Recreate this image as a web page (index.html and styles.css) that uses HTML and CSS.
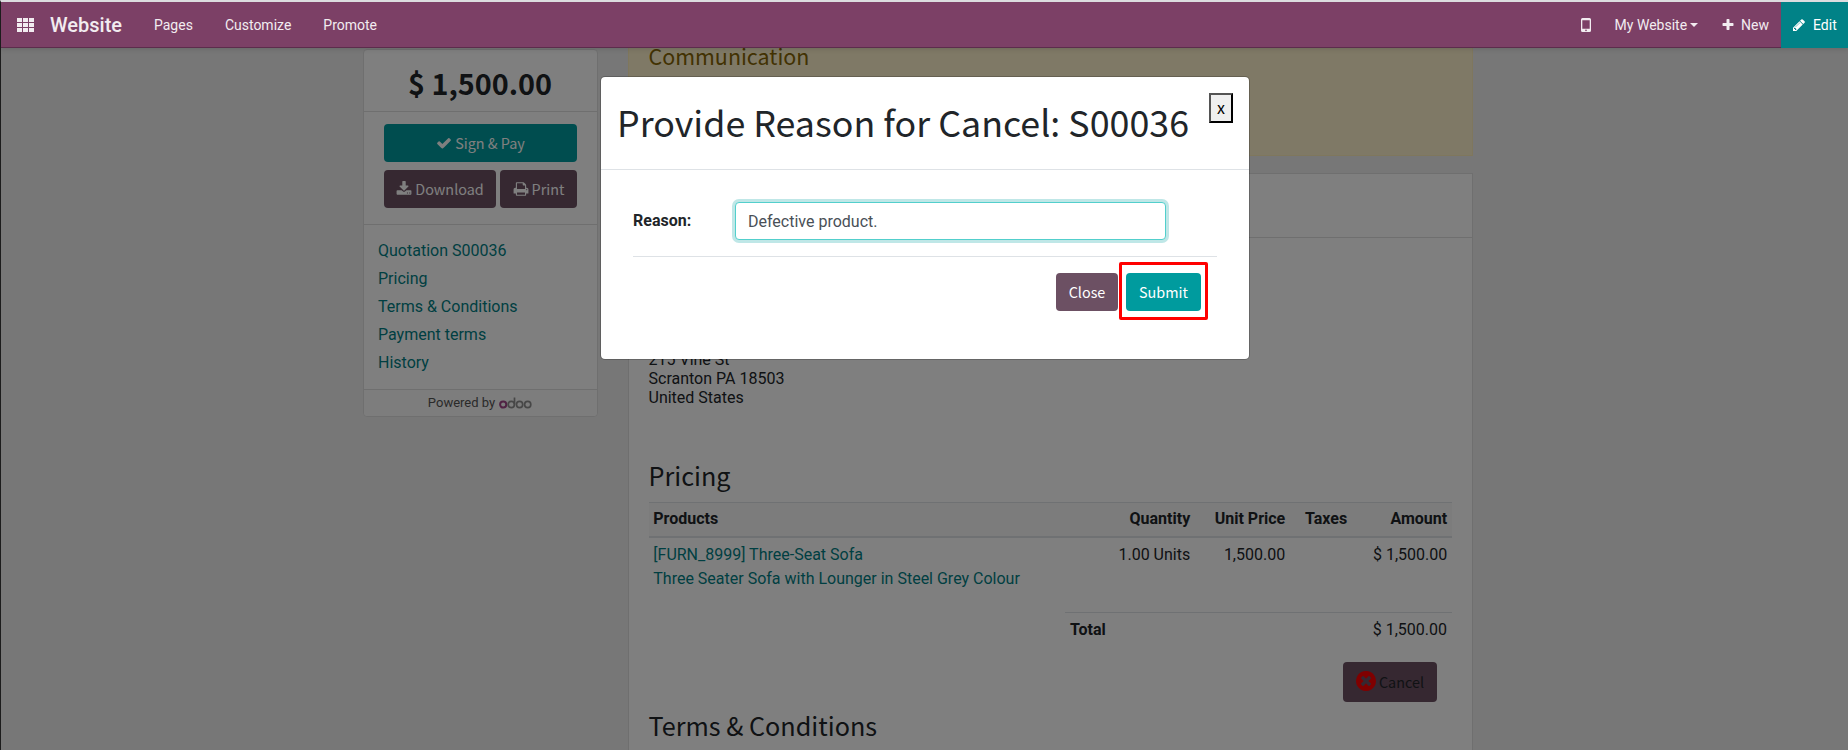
FILE: index.html
```html
<!DOCTYPE html>
<html lang="en">
<head>
<meta charset="utf-8">
<title>Website</title>
<link rel="stylesheet" href="styles.css">
</head>
<body>
<div class="window">
  <nav class="navbar">
    <svg class="apps" viewBox="0 0 17 14"><path d="M0 0h5v4H0zM6 0h5v4H6zM12 0h5v4h-5zM0 5h5v4H0zM6 5h5v4H6zM12 5h5v4h-5zM0 10h5v4H0zM6 10h5v4H6zM12 10h5v4h-5z"/></svg>
    <span class="brand">Website</span>
    <span class="menu-item">Pages</span>
    <span class="menu-item">Customize</span>
    <span class="menu-item">Promote</span>
    <div class="systray">
      <svg class="mobile" viewBox="0 0 10 14"><path fill-rule="evenodd" d="M1.5 0h7A1.5 1.5 0 0 1 10 1.500v11A1.500 1.500 0 0 1 8.500 14h-7A1.500 1.500 0 0 1 0 12.500v-11A1.500 1.500 0 0 1 1.500 0zM1.300 2.200v8.600h7.400V2.200zM5 11.600a.8.8 0 1 0 0 1.600.8.8 0 0 0 0-1.600z"/></svg>
      <span class="site">My Website<i class="caret"></i></span>
      <span class="new"><svg class="icon" viewBox="0 0 1792 1792"><path d="M1600 736v192q0 40-28 68t-68 28h-416v416q0 40-28 68t-68 28h-192q-40 0-68-28t-28-68v-416h-416q-40 0-68-28t-28-68v-192q0-40 28-68t68-28h416v-416q0-40 28-68t68-28h192q40 0 68 28t28 68v416h416q40 0 68 28t28 68z"/></svg>New</span>
      <span class="edit"><svg class="icon" viewBox="0 0 1792 1792"><path d="M491 1536l91-91-235-235-91 91v107h128v128h107zm523-928q0-22-22-22-10 0-17 7l-542 542q-7 7-7 17 0 22 22 22 10 0 17-7l542-542q7-7 7-17zm-54-192l416 416-832 832h-416v-416zm683 96q0 53-37 90l-166 166-416-416 166-165q36-38 90-38 53 0 91 38l235 234q37 39 37 91z"/></svg>Edit</span>
    </div>
  </nav>

  <main class="page">
    <aside class="sidebar">
      <div class="amount"><b>$ 1,500.00</b></div>
      <div class="actions">
        <span class="btn primary wide"><svg class="bicon" viewBox="0 0 1792 1792"><path d="M1671 566q0 40-28 68l-724 724-136 136q-28 28-68 28t-68-28l-136-136-362-362q-28-28-28-68t28-68l136-136q28-28 68-28t68 28l294 295 656-657q28-28 68-28t68 28l136 136q28 28 28 68z"/></svg>Sign &amp; Pay</span>
        <div class="pair">
          <span class="btn secondary download"><svg class="bicon" viewBox="0 0 1792 1792"><path d="M1344 1344q0-26-19-45t-45-19-45 19-19 45 19 45 45 19 45-19 19-45zm256 0q0-26-19-45t-45-19-45 19-19 45 19 45 45 19 45-19 19-45zm128-224v320q0 40-28 68t-68 28h-1472q-40 0-68-28t-28-68v-320q0-40 28-68t68-28h465l135 136q58 56 136 56t136-56l136-136h464q40 0 68 28t28 68zm-325-569q17 41-14 70l-448 448q-18 19-45 19t-45-19l-448-448q-31-29-14-70 17-39 59-39h256v-448q0-26 19-45t45-19h256q26 0 45 19t19 45v448h256q42 0 59 39z"/></svg>Download</span>
          <span class="btn secondary print"><svg class="bicon" viewBox="0 0 1792 1792"><path d="M448 1536h896v-256h-896v256zm0-640h896v-384h-160q-40 0-68-28t-28-68v-160h-640v640zm1152 64q0-26-19-45t-45-19-45 19-19 45 19 45 45 19 45-19 19-45zm128 0v416q0 13-9.500 22.500t-22.500 9.500h-224v160q0 40-28 68t-68 28h-960q-40 0-68-28t-28-68v-160h-224q-13 0-22.500-9.500t-9.500-22.500v-416q0-79 56.500-135.500t135.500-56.500h64v-544q0-40 28-68t68-28h672q40 0 88 20t76 48l152 152q28 28 48 76t20 88v256h64q79 0 135.500 56.500t56.500 135.500z"/></svg>Print</span>
        </div>
      </div>
      <ul class="toc">
        <li>Quotation S00036</li>
        <li>Pricing</li>
        <li>Terms &amp; Conditions</li>
        <li>Payment terms</li>
        <li>History</li>
      </ul>
      <div class="powered">Powered by
        <svg class="odoo" viewBox="0 0 33 12" fill="none" stroke-width="1.700"><circle cx="4.200" cy="7.500" r="3.100" stroke="#a24689" stroke-width="2"/><g stroke="#8f8f8f"><circle cx="12.300" cy="7.500" r="3.100"/><path d="M15.500 0.500v7"/><circle cx="20.600" cy="7.500" r="3.100"/><circle cx="28.700" cy="7.500" r="3.100"/></g></svg>
      </div>
    </aside>

    <section class="content">
      <div class="alert"><h3>Communication</h3></div>
      <article class="card">
        <div class="card-head"></div>
        <address class="address">215 Vine St<br>Scranton PA 18503<br>United States</address>
        <h2 class="title">Pricing</h2>
        <table class="lines">
          <colgroup><col class="c-product"><col class="c-qty"><col class="c-price"><col class="c-tax"><col class="c-amount"></colgroup>
          <thead><tr><th class="left">Products</th><th>Quantity</th><th>Unit Price</th><th>Taxes</th><th>Amount</th></tr></thead>
          <tbody><tr><td class="left product">[FURN_8999] Three-Seat Sofa<br>Three Seater Sofa with Lounger in Steel Grey Colour</td><td>1.00 Units</td><td>1,500.00</td><td></td><td>$ 1,500.00</td></tr></tbody>
        </table>
        <div class="total"><b>Total</b><span>$ 1,500.00</span></div>
        <div class="cancel-row"><span class="btn secondary cancel"><svg class="cross" viewBox="128 128 1536 1536"><path d="M1277 1122q0-26-19-45l-181-181 181-181q19-19 19-45 0-27-19-46l-90-90q-19-19-46-19-26 0-45 19l-181 181-181-181q-19-19-45-19-27 0-46 19l-90 90q-19 19-19 46 0 26 19 45l181 181-181 181q-19 19-19 45 0 27 19 46l90 90q19 19 46 19 26 0 45-19l181-181 181 181q19 19 45 19 27 0 46-19l90-90q19-19 19-46zm387-226q0 209-103 385.500t-279.500 279.500-385.500 103-385.500-103-279.500-279.500-103-385.500 103-385.500 279.500-279.500 385.500-103 385.500 103 279.500 279.500 103 385.500z"/></svg>Cancel</span></div>
        <h2 class="title terms">Terms &amp; Conditions</h2>
      </article>
    </section>
  </main>

  <div class="backdrop">
    <div class="modal">
      <header class="modal-head">
        <h1>Provide Reason for Cancel: S00036</h1>
        <button class="close-x" type="button">x</button>
      </header>
      <div class="modal-body">
        <div class="field">
          <label for="reason">Reason:</label>
          <input id="reason" class="reason" type="text" value="Defective product.">
        </div>
        <footer class="modal-foot">
          <span class="btn secondary close">Close</span>
          <div class="highlight"><span class="btn primary submit">Submit</span></div>
        </footer>
      </div>
    </div>
  </div>
</div>
</body>
</html>
```
FILE: styles.css
```css
* { box-sizing: border-box; }
body {
  margin: 0;
  font: 16px/24px Roboto, "Liberation Sans", sans-serif;
  color: #212529;
}
h1, h2, h3, ul { margin: 0; padding: 0; font-weight: 400; }
h1, h2, h3, .btn, .amount { font-family: "Noto Sans CJK SC", "Open Sans", sans-serif; }

.window {
  position: relative;
  width: 1848px;
  height: 750px;
  overflow: hidden;
  background: #efefef;
  border-top: 2px solid #dcdcdf;
  border-left: 1px solid #1c1c1c;
}

/* Top bar */
.navbar {
  position: relative;
  z-index: 3;
  display: flex;
  align-items: center;
  height: 46px;
  padding-left: 16px;
  background: #7c4066;
  border-bottom: 1px solid #5c2c4c;
  box-shadow: 0 1px 5px rgba(0, 0, 0, .15);
  color: #f2ecf0;
  font-size: 14px;
}
.apps { width: 17px; height: 14px; margin-right: 16px; fill: #f2ecf0; }
.brand { width: 104px; font-size: 20px; font-weight: 500; }
.menu-item { margin-right: 32px; }
.systray { display: flex; align-items: center; align-self: stretch; margin-left: auto; margin-bottom: -1px; }
.mobile { width: 10px; height: 14px; margin-right: 24px; fill: #f2ecf0; }
.site { display: flex; align-items: center; margin-right: 23px; }
.caret { margin-left: 3px; border: 4px solid transparent; border-top-color: #f2ecf0; border-bottom: 0; }
.icon { width: 14px; height: 14px; margin-right: 6px; fill: currentColor; }
.new, .edit { display: flex; align-items: center; }
.new { margin-right: 12px; }
.edit { width: 67px; padding-left: 11px; align-self: stretch; background: #018287; color: #fff; }
.edit .icon { margin-right: 7px; }

/* Page behind the dialog */
.page { display: flex; align-items: flex-start; gap: 30px; padding-left: 362px; }
.sidebar {
  width: 235px;
  margin-top: 1px;
  background: #fff;
  border: 1px solid #dfdfdf;
  border-radius: 4px;
}
.amount {
  display: flex;
  justify-content: center;
  height: 62px;
  padding-right: 1px;
  border-bottom: 1px solid #dfdfdf;
  font-size: 28.800px;
  line-height: 66px;
}
.actions { height: 113px; padding: 12px 20px; border-bottom: 1px solid #dfdfdf; }
.pair { display: flex; gap: 4px; margin-top: 8px; }
.btn {
  display: inline-flex;
  align-items: center;
  justify-content: center;
  height: 38px;
  border-radius: 4px;
  font-size: 14.400px;
  line-height: 36px;
  color: #fff;
}
.primary { background: #009b9e; }
.secondary { background: #6c5063; }
.wide { width: 193px; }
.download { width: 112px; }
.print { width: 77px; }
.bicon { width: 16px; height: 16px; margin-right: 3px; fill: currentColor; }
.toc { height: 165px; padding: 12px 14px; list-style: none; border-bottom: 1px solid #dfdfdf; color: #017e84; }
.toc li { height: 28px; line-height: 28px; }
.powered {
  display: flex;
  align-items: center;
  justify-content: center;
  gap: 4px;
  height: 26px;
  padding: 0 1px 1px 0;
  background: #fafafa;
  border-radius: 0 0 4px 4px;
  font-size: 13px;
  color: #555;
}
.odoo { width: 33px; height: 12px; margin-top: 1px; }

.content { width: 845px; }
.alert {
  display: flow-root;
  height: 108px;
  padding-left: 19.500px;
  background: #fff3cd;
  border: 1px solid #ffeeba;
  border-top: 0;
  color: #856404;
}
.alert h3 { margin-top: -7px; font-size: 21.450px; line-height: 30px; }
.card {
  height: 600px;
  margin-top: 17px;
  padding: 0 20px 0 19.500px;
  background: #fff;
  border: 1px solid #dfdfdf;
}
.card-head { height: 64px; margin: 0 -20px 0 -19.500px; border-bottom: 1px solid #dfdfdf; }
.address { padding-top: 112px; font-style: normal; line-height: 19px; }
.title { margin-top: 52px; font-size: 25.200px; line-height: 32px; }
.lines { width: 803.500px; margin-top: 11px; border-collapse: collapse; table-layout: fixed; }
.c-qty { width: 130px; }
.c-price { width: 95px; }
.c-tax { width: 62px; }
.c-amount { width: 100px; }
.lines th, .lines td { padding: 4px 4.800px; text-align: right; vertical-align: top; }
.lines th { height: 34px; padding-bottom: 3px; background: #f8f8f8; border-top: 1px solid #dee2e6; border-bottom: 2px solid #dee2e6; }
.lines td { padding-top: 5px; }
.lines .left { text-align: left; }
.lines .product { color: #017e84; }
.total {
  display: flex;
  justify-content: space-between;
  width: 387px;
  height: 34px;
  margin: 17px 0 0 auto;
  padding: 5px;
  border-top: 1px solid #dee2e6;
}
.cancel-row { display: flex; justify-content: flex-end; margin: 16px 15px 0 0; }
.cancel { width: 94px; height: 40px; color: #212529; line-height: 44px; }
.cross { width: 20px; height: 20px; margin: -2px 3px 0 0; fill: #f00; }
.title.terms { margin-top: 7px; }

/* Dialog */
.backdrop {
  position: absolute;
  inset: 46px 0 0 0;
  z-index: 2;
  padding: 28px 0 0 599px;
  background: rgba(0, 0, 0, .5);
}
.modal {
  width: 650px;
  height: 284px;
  background: #fff;
  background-clip: padding-box;
  border: 1px solid rgba(0, 0, 0, .2);
  border-radius: 5px;
}
.modal-head {
  display: flex;
  align-items: flex-start;
  justify-content: space-between;
  height: 93px;
  padding: 16px;
  border-bottom: 1px solid #dee2e6;
}
.modal-head h1 { font-size: 35.800px; line-height: 56px; white-space: nowrap; }
.close-x {
  width: 24px;
  height: 30px;
  padding: 0 0 4px;
  background: #efefef;
  border: 2px outset #000;
  font: 16px/24px "Noto Sans CJK SC", sans-serif;
  color: #000;
}
.modal-body { padding: 32px; }
.field { display: flex; width: 584px; height: 55px; border-bottom: 1px solid #dee2e6; }
.field label { width: 102px; line-height: 38px; font-weight: 700; }
.reason {
  width: 431px;
  height: 38px;
  padding: 0 12px;
  border: 1px solid #52cfcc;
  border-radius: 4px;
  outline: 0;
  box-shadow: 0 0 0 3px #bfe7e7;
  font: 16px Roboto, sans-serif;
  color: #495057;
}
.modal-foot { display: flex; justify-content: flex-end; width: 584px; padding: 5px 9px 0 0; gap: 1px; }
.close { width: 62px; margin-top: 11px; }
.highlight { width: 89px; height: 58px; padding: 8px 4px; border: 3px solid #f00; border-radius: 2px; }
.submit { width: 75px; }
```
